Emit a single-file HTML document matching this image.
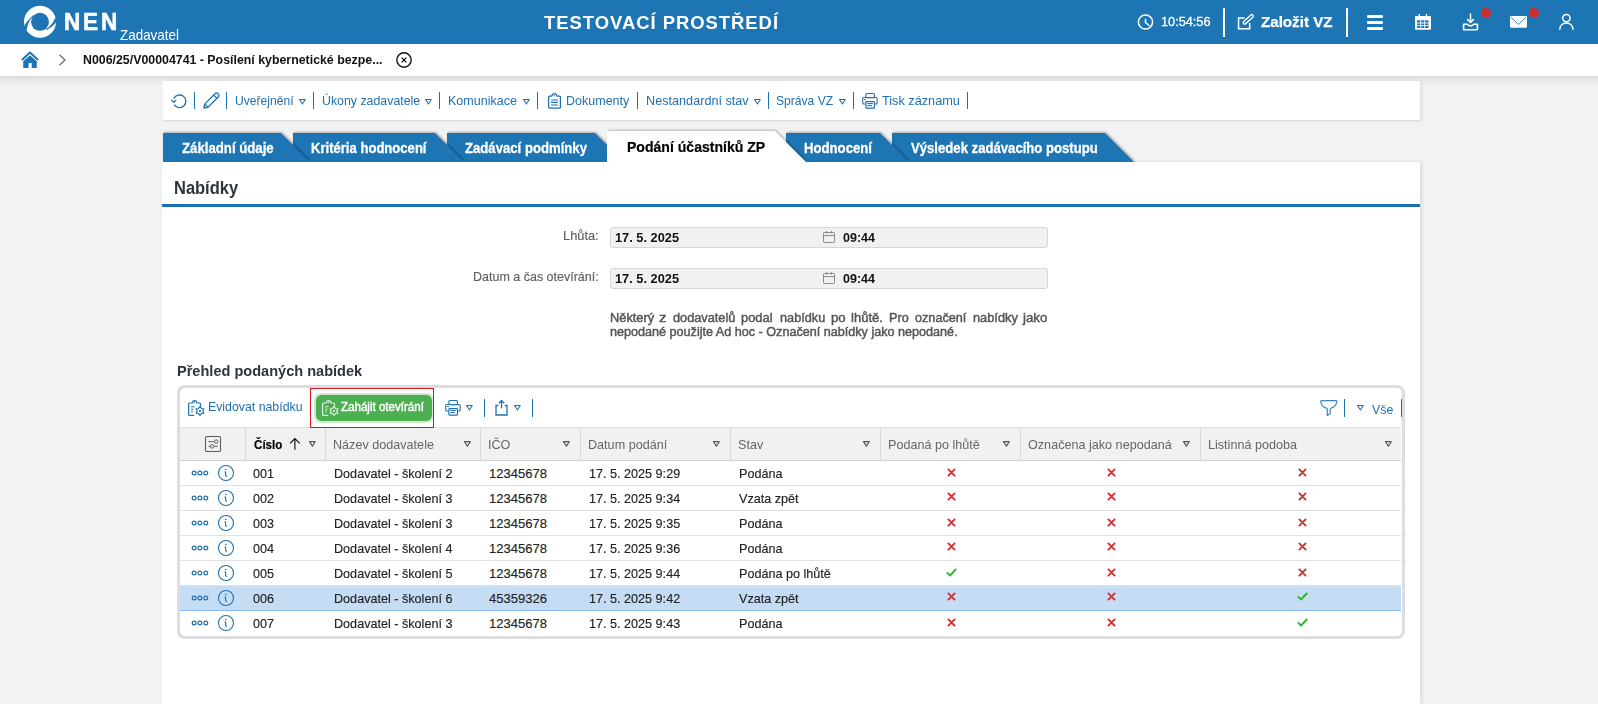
<!DOCTYPE html>
<html><head><meta charset="utf-8"><style>
html,body{margin:0;padding:0;}
body{width:1598px;height:704px;overflow:hidden;position:relative;background:#f2f2f2;font-family:"Liberation Sans", sans-serif;}
.t{position:absolute;white-space:nowrap;line-height:1;transform-origin:0 0;}
.a{position:absolute;}
svg{position:absolute;overflow:visible;}
</style></head><body>
<div class="a" style="left:0px;top:0px;width:1598px;height:44px;background:#1e75b4;"></div>
<svg style="left:20px;top:2px;" width="40" height="40" viewBox="0 0 40 40"><circle cx="20" cy="19.8" r="16" fill="#fff"/><circle cx="20" cy="19.85" r="9" fill="#1e75b4"/><path d="M3.6 24.9 Q6.2 19.8 12.9 13.2 L13.5 14.0 Q7.6 19 6.7 28.6 Z" fill="#1e75b4"/><path d="M35.2 15.6 Q33 23 25.8 27.2 L26.6 27.9 Q33.8 24.2 37 19 Z" fill="#1e75b4"/></svg>
<svg style="left:1136px;top:12px;" width="20" height="20" viewBox="0 0 20 20"><circle cx="9.5" cy="10" r="7.1" stroke="#fff" stroke-width="1.5" fill="none"/><path d="M9.5 7.3 V10.5 L13 13.5" stroke="#fff" stroke-width="1.5" fill="none" stroke-linecap="round" stroke-linejoin="round"/></svg>
<div class="a" style="left:1222.5px;top:8px;width:2px;height:29px;background:#fff;"></div>
<div class="a" style="left:1345.5px;top:8px;width:2px;height:29px;background:#fff;"></div>
<svg style="left:1235px;top:12px;" width="22" height="20" viewBox="0 0 22 20"><path d="M9.6 6.05 H3.55 V16.7 H14.65 V11.1" stroke="#fff" stroke-width="1.5" fill="none"/><rect x="-6.3" y="-1.5" width="12.6" height="3" rx="1.5" transform="translate(13.3 7.3) rotate(-42)" stroke="#fff" stroke-width="1.35" fill="none"/></svg>
<div class="a" style="left:1366.8px;top:15px;width:16.2px;height:2.6px;background:#fff;border-radius:1.3px;"></div>
<div class="a" style="left:1366.8px;top:21px;width:16.2px;height:2.6px;background:#fff;border-radius:1.3px;"></div>
<div class="a" style="left:1366.8px;top:27px;width:16.2px;height:2.6px;background:#fff;border-radius:1.3px;"></div>
<svg style="left:1413px;top:12px;" width="20" height="20" viewBox="0 0 20 20"><rect x="2" y="4" width="16" height="13.8" rx="1" fill="#fff"/><rect x="4" y="8.3" width="11.5" height="7.7" fill="#1e75b4"/><path d="M4 11 H15.5 M4 13.6 H15.5 M7.8 8.3 V16 M11.6 8.3 V16" stroke="#fff" stroke-width="0.9"/><rect x="5.6" y="2" width="1.4" height="3.5" fill="#fff"/><rect x="12.8" y="2" width="1.4" height="3.5" fill="#fff"/></svg>
<svg style="left:1461px;top:12px;" width="20" height="20" viewBox="0 0 20 20"><path d="M9.5 2 V10.3 M6.6 7.6 L9.5 10.5 L12.4 7.6" stroke="#fff" stroke-width="1.5" fill="none" stroke-linecap="round" stroke-linejoin="round"/><path d="M2.6 12.3 H6.2 Q9.5 15.5 12.8 12.3 H16.4 V17.2 Q16.4 17.8 15.8 17.8 H3.2 Q2.6 17.8 2.6 17.2 Z" stroke="#fff" stroke-width="1.6" fill="none" stroke-linejoin="round"/></svg>
<div class="a" style="left:1481px;top:8px;width:10px;height:10px;border-radius:50%;background:#d02e2e;"></div>
<svg style="left:1509px;top:15px;" width="20" height="14" viewBox="0 0 20 14"><rect x="1" y="1" width="17" height="11.8" rx="1.2" fill="#fff"/><path d="M2 2.3 L9.5 9.5 L17 2.3" stroke="#1e75b4" stroke-width="0.9" fill="none"/></svg>
<div class="a" style="left:1529px;top:8px;width:10px;height:10px;border-radius:50%;background:#d02e2e;"></div>
<svg style="left:1557px;top:12px;" width="20" height="20" viewBox="0 0 20 20"><circle cx="9.4" cy="6.1" r="3.7" stroke="#fff" stroke-width="1.5" fill="none"/><path d="M2.8 17.8 C2.8 13.5 5.7 11 9.4 11 C13.1 11 16 13.5 16 17.8" stroke="#fff" stroke-width="1.5" fill="none"/></svg>
<div class="a" style="left:0px;top:44px;width:1598px;height:32px;background:#fff;"></div>
<div class="a" style="left:0px;top:76px;width:1598px;height:10px;background:linear-gradient(#dadada,#e9e9e9 40%,#f2f2f2);"></div>
<svg style="left:20px;top:50px;" width="20" height="20" viewBox="0 0 20 20"><path d="M2.4 9.4 L10 2.6 L17.6 9.4" stroke="#1e75b4" stroke-width="2" fill="none" stroke-linecap="round" stroke-linejoin="round"/><path d="M3.2 11.2 L10 5.3 L16.8 11.2 V18 H11.7 V12.9 H8.6 V18 H3.2 Z" fill="#1e75b4"/></svg>
<svg style="left:56px;top:52px;" width="12" height="16" viewBox="0 0 12 16"><path d="M3.5 2.8 L9 8 L3.5 13.2" stroke="#6a6a6a" stroke-width="1.2" fill="none"/></svg>
<svg style="left:394px;top:50px;" width="20" height="20" viewBox="0 0 20 20"><circle cx="10" cy="10" r="7.2" stroke="#111" stroke-width="1.4" fill="none"/><path d="M7.6 7.6 L12.4 12.4 M12.4 7.6 L7.6 12.4" stroke="#111" stroke-width="1.3"/></svg>
<div class="a" style="left:163px;top:81px;width:1257px;height:40px;background:#fff;box-shadow:2px 0 3px rgba(0,0,0,0.08);border-bottom:1px solid #dcdcdc;box-sizing:border-box;"></div>
<svg style="left:168px;top:90px;" width="22" height="22" viewBox="0 0 22 22"><path d="M6.2 14.6 A6.3 6.3 0 1 0 5.9 8.6" stroke="#1f70b0" stroke-width="1.3" fill="none"/><path d="M3.4 10 L5.8 12.4 L8.2 10" stroke="#1f70b0" stroke-width="1.3" fill="none" stroke-linejoin="round"/></svg>
<div class="a" style="left:193.8px;top:92px;width:1.2px;height:17px;background:#1f70b0;"></div>
<div class="a" style="left:225.8px;top:92px;width:1.2px;height:17px;background:#1f70b0;"></div>
<div class="a" style="left:312.79999999999995px;top:92px;width:1.2px;height:17px;background:#1f70b0;"></div>
<div class="a" style="left:438.79999999999995px;top:92px;width:1.2px;height:17px;background:#1f70b0;"></div>
<div class="a" style="left:536.8px;top:92px;width:1.2px;height:17px;background:#1f70b0;"></div>
<div class="a" style="left:636.8px;top:92px;width:1.2px;height:17px;background:#1f70b0;"></div>
<div class="a" style="left:767.8px;top:92px;width:1.2px;height:17px;background:#1f70b0;"></div>
<div class="a" style="left:852.8px;top:92px;width:1.2px;height:17px;background:#1f70b0;"></div>
<div class="a" style="left:966.8px;top:92px;width:1.2px;height:17px;background:#1f70b0;"></div>
<svg style="left:201px;top:90px;" width="22" height="22" viewBox="0 0 22 22"><path d="M2.8 18.2 L3.7 14.1 L14.3 3.5 a1.8 1.8 0 0 1 2.5 0 L17.5 4.2 a1.8 1.8 0 0 1 0 2.5 L6.9 17.3 Z" stroke="#1f70b0" stroke-width="1.25" fill="none" stroke-linejoin="round"/><path d="M3.7 14.1 L6.9 17.3 M12.7 5.1 L15.9 8.3" stroke="#1f70b0" stroke-width="1.25"/></svg>
<svg style="left:297.7px;top:97.5px;" width="8.8" height="7.6" viewBox="0 0 8.8 7.6"><path d="M1.55 1.55 H7.25 L4.40 6.05 Z" stroke="#1f70b0" stroke-width="1.1" fill="none" stroke-linejoin="round"/></svg>
<svg style="left:424px;top:97.5px;" width="8.8" height="7.6" viewBox="0 0 8.8 7.6"><path d="M1.55 1.55 H7.25 L4.40 6.05 Z" stroke="#1f70b0" stroke-width="1.1" fill="none" stroke-linejoin="round"/></svg>
<svg style="left:522px;top:97.5px;" width="8.8" height="7.6" viewBox="0 0 8.8 7.6"><path d="M1.55 1.55 H7.25 L4.40 6.05 Z" stroke="#1f70b0" stroke-width="1.1" fill="none" stroke-linejoin="round"/></svg>
<svg style="left:753px;top:97.5px;" width="8.8" height="7.6" viewBox="0 0 8.8 7.6"><path d="M1.55 1.55 H7.25 L4.40 6.05 Z" stroke="#1f70b0" stroke-width="1.1" fill="none" stroke-linejoin="round"/></svg>
<svg style="left:837.9px;top:97.5px;" width="8.8" height="7.6" viewBox="0 0 8.8 7.6"><path d="M1.55 1.55 H7.25 L4.40 6.05 Z" stroke="#1f70b0" stroke-width="1.1" fill="none" stroke-linejoin="round"/></svg>
<svg style="left:545px;top:92px;" width="18" height="18" viewBox="0 0 18 18"><path d="M6.8 4 H4.6 Q3.6 4 3.6 5 V15.2 Q3.6 16.2 4.6 16.2 H14.4 Q15.4 16.2 15.4 15.2 V5 Q15.4 4 14.4 4 H12 Q11.4 1.6 9.4 1.6 Q7.4 1.6 6.8 4 Z" stroke="#1f70b0" stroke-width="1.25" fill="none" stroke-linejoin="round"/><circle cx="9.4" cy="3.7" r="0.65" fill="#1f70b0"/><path d="M6.1 8 H12.9 M6.1 10.4 H12.9 M6.1 13 H12.9" stroke="#1f70b0" stroke-width="1.1"/></svg>
<svg style="left:861px;top:92px;" width="18" height="18" viewBox="0 0 18 18"><rect x="4.85" y="1.55" width="8.6" height="4.2" rx="1" stroke="#1f70b0" stroke-width="1.1" fill="none"/><path d="M4.85 12.05 H2.75 Q1.75 12.05 1.75 11.05 V6.55 Q1.75 5.55 2.75 5.55 H15.15 Q16.15 5.55 16.15 6.55 V11.05 Q16.15 12.05 15.15 12.05 H13.45" stroke="#1f70b0" stroke-width="1.1" fill="none"/><rect x="4.85" y="9.65" width="8.6" height="6.5" rx="0.6" stroke="#1f70b0" stroke-width="1.1" fill="#fff"/><path d="M6.2 11.6 H11.9 M6.2 13.6 H11" stroke="#1f70b0" stroke-width="1"/><path d="M3 7.5 H5" stroke="#1f70b0" stroke-width="0.9"/></svg>
<div class="a" style="left:162px;top:162px;width:1258px;height:542px;background:#fff;box-shadow:2px 0 4px rgba(0,0,0,0.10);"></div>
<svg style="left:0;top:0;overflow:hidden" width="1598" height="162" viewBox="0 0 1598 162"><polygon points="892,133 1105,133 1134,162 892,162" fill="#1e75b4" style="filter:drop-shadow(1.5px -1px 1px rgba(0,0,0,0.3))"/><polygon points="786,133 880,133 909,162 786,162" fill="#1e75b4" style="filter:drop-shadow(1.5px -1px 1px rgba(0,0,0,0.3))"/><polygon points="447,133 595,133 624,162 447,162" fill="#1e75b4" style="filter:drop-shadow(1.5px -1px 1px rgba(0,0,0,0.3))"/><polygon points="293,133 435,133 464,162 293,162" fill="#1e75b4" style="filter:drop-shadow(1.5px -1px 1px rgba(0,0,0,0.3))"/><polygon points="163,133 281,133 310,162 163,162" fill="#1e75b4" style="filter:drop-shadow(1.5px -1px 1px rgba(0,0,0,0.3))"/><polygon points="607,131 775,131 806,162 607,162" fill="#fff" style="filter:drop-shadow(1.5px -1px 1px rgba(0,0,0,0.25))"/></svg>
<div class="a" style="left:162px;top:204px;width:1258px;height:3px;background:#1a6fb0;"></div>
<div class="a" style="left:610px;top:227px;width:438px;height:21px;background:#f1f1f1;border:1px solid #d6d6d6;border-radius:3px;box-sizing:border-box;"></div>
<svg style="left:822px;top:230px;" width="14" height="14" viewBox="0 0 14 14"><rect x="1.5" y="2.5" width="11" height="10" rx="0.8" stroke="#8a8a8a" stroke-width="1" fill="none"/><path d="M1.5 5.6 H12.5" stroke="#8a8a8a" stroke-width="1"/><path d="M4.5 1 V3.5 M9.5 1 V3.5" stroke="#8a8a8a" stroke-width="1"/></svg>
<div class="a" style="left:610px;top:268px;width:438px;height:21px;background:#f1f1f1;border:1px solid #d6d6d6;border-radius:3px;box-sizing:border-box;"></div>
<svg style="left:822px;top:271px;" width="14" height="14" viewBox="0 0 14 14"><rect x="1.5" y="2.5" width="11" height="10" rx="0.8" stroke="#8a8a8a" stroke-width="1" fill="none"/><path d="M1.5 5.6 H12.5" stroke="#8a8a8a" stroke-width="1"/><path d="M4.5 1 V3.5 M9.5 1 V3.5" stroke="#8a8a8a" stroke-width="1"/></svg>
<div class="a" style="left:177px;top:385px;width:1228px;height:254px;border:3px solid #dcdde0;border-radius:8px;background:#fff;box-sizing:border-box;"></div>
<svg style="left:187px;top:399px;" width="18" height="18" viewBox="0 0 18 18"><path d="M7.2 16.4 H2.6 Q1.6 16.4 1.6 15.4 V5 Q1.6 4 2.6 4 H5.2 Q5.6 1.6 7.6 1.6 Q9.6 1.6 10 4 H12.5 Q13.5 4 13.5 5 V7.6" stroke="#1f70b0" stroke-width="1.2" fill="none" stroke-linejoin="round"/><circle cx="7.6" cy="3.6" r="0.7" fill="#1f70b0"/><path d="M4.1 7.7 H7.6 M4.1 10.3 H6.6 M4.1 12.7 H6" stroke="#1f70b0" stroke-width="1.1"/><path d="M13.00 7.60 L14.45 9.49 L16.81 9.80 L15.90 12.00 L16.81 14.20 L14.45 14.51 L13.00 16.40 L11.55 14.51 L9.19 14.20 L10.10 12.00 L9.19 9.80 L11.55 9.49 Z" stroke="#1f70b0" stroke-width="1.2" fill="#fff" stroke-linejoin="round"/><circle cx="13" cy="12" r="1.1" fill="#1f70b0"/></svg>
<div class="a" style="left:314px;top:393px;width:119.5px;height:29.5px;border-radius:7px;background:#4caf50;border:2px solid #cfe8cf;box-sizing:border-box;background-clip:padding-box;"></div>
<svg style="left:321px;top:399px;" width="18" height="18" viewBox="0 0 18 18"><path d="M7.2 16.4 H2.6 Q1.6 16.4 1.6 15.4 V5 Q1.6 4 2.6 4 H5.2 Q5.6 1.6 7.6 1.6 Q9.6 1.6 10 4 H12.5 Q13.5 4 13.5 5 V7.6" stroke="#e3f2e3" stroke-width="1.2" fill="none" stroke-linejoin="round"/><circle cx="7.6" cy="3.6" r="0.7" fill="#e3f2e3"/><path d="M4.1 7.7 H7.6 M4.1 10.3 H6.6 M4.1 12.7 H6" stroke="#e3f2e3" stroke-width="1.1"/><path d="M13.00 7.60 L14.45 9.49 L16.81 9.80 L15.90 12.00 L16.81 14.20 L14.45 14.51 L13.00 16.40 L11.55 14.51 L9.19 14.20 L10.10 12.00 L9.19 9.80 L11.55 9.49 Z" stroke="#e3f2e3" stroke-width="1.2" fill="#4caf50" stroke-linejoin="round"/><circle cx="13" cy="12" r="1.1" fill="#e3f2e3"/></svg>
<svg style="left:444px;top:399px;" width="18" height="18" viewBox="0 0 18 18"><rect x="4.85" y="1.55" width="8.6" height="4.2" rx="1" stroke="#1f70b0" stroke-width="1.1" fill="none"/><path d="M4.85 12.05 H2.75 Q1.75 12.05 1.75 11.05 V6.55 Q1.75 5.55 2.75 5.55 H15.15 Q16.15 5.55 16.15 6.55 V11.05 Q16.15 12.05 15.15 12.05 H13.45" stroke="#1f70b0" stroke-width="1.1" fill="none"/><rect x="4.85" y="9.65" width="8.6" height="6.5" rx="0.6" stroke="#1f70b0" stroke-width="1.1" fill="#fff"/><path d="M6.2 11.6 H11.9 M6.2 13.6 H11" stroke="#1f70b0" stroke-width="1"/><path d="M3 7.5 H5" stroke="#1f70b0" stroke-width="0.9"/></svg>
<svg style="left:465px;top:404px;" width="8.8" height="7.6" viewBox="0 0 8.8 7.6"><path d="M1.55 1.55 H7.25 L4.40 6.05 Z" stroke="#1f70b0" stroke-width="1.1" fill="none" stroke-linejoin="round"/></svg>
<div class="a" style="left:483.79999999999995px;top:399px;width:1.2px;height:18px;background:#1f70b0;"></div>
<svg style="left:492px;top:398px;" width="20" height="20" viewBox="0 0 20 20"><path d="M6.3 7.5 H4 V17 H15 V7.5 H12.7" stroke="#1f70b0" stroke-width="1.3" fill="none"/><path d="M9.5 10.2 V2.5 M6.8 5.2 L9.5 2.5 L12.2 5.2" stroke="#1f70b0" stroke-width="1.3" fill="none" stroke-linejoin="round"/></svg>
<svg style="left:512.6px;top:404px;" width="8.8" height="7.6" viewBox="0 0 8.8 7.6"><path d="M1.55 1.55 H7.25 L4.40 6.05 Z" stroke="#1f70b0" stroke-width="1.1" fill="none" stroke-linejoin="round"/></svg>
<div class="a" style="left:531.8px;top:399px;width:1.2px;height:18px;background:#1f70b0;"></div>
<svg style="left:1319px;top:398px;" width="20" height="20" viewBox="0 0 20 20"><path d="M2.5 2.7 H17.1 Q18 2.7 17.8 3.6 Q17 8.8 12 10.2 Q11.2 10.5 11.2 11.3 V15.6 L8.3 17.4 V11.3 Q8.3 10.5 7.5 10.2 Q2.5 8.8 1.7 3.6 Q1.5 2.7 2.5 2.7 Z" stroke="#3a86c4" stroke-width="1.2" fill="none" stroke-linejoin="round"/></svg>
<div class="a" style="left:1343.8000000000002px;top:399px;width:1.2px;height:18px;background:#1f70b0;"></div>
<svg style="left:1356px;top:404px;" width="8.8" height="7.6" viewBox="0 0 8.8 7.6"><path d="M1.55 1.55 H7.25 L4.40 6.05 Z" stroke="#1f70b0" stroke-width="1.1" fill="none" stroke-linejoin="round"/></svg>
<div class="a" style="left:1400.8000000000002px;top:399px;width:1.2px;height:18px;background:#1f70b0;"></div>
<div class="a" style="left:180px;top:427px;width:1221px;height:34px;background:#f1f1f1;border-top:1px solid #e0e0e0;border-bottom:1px solid #d3d3d3;box-sizing:border-box;"></div>
<div class="a" style="left:245px;top:428px;width:1px;height:32px;background:#d8d8d8;"></div>
<div class="a" style="left:325px;top:428px;width:1px;height:32px;background:#d8d8d8;"></div>
<div class="a" style="left:480px;top:428px;width:1px;height:32px;background:#d8d8d8;"></div>
<div class="a" style="left:580px;top:428px;width:1px;height:32px;background:#d8d8d8;"></div>
<div class="a" style="left:730px;top:428px;width:1px;height:32px;background:#d8d8d8;"></div>
<div class="a" style="left:880px;top:428px;width:1px;height:32px;background:#d8d8d8;"></div>
<div class="a" style="left:1020px;top:428px;width:1px;height:32px;background:#d8d8d8;"></div>
<div class="a" style="left:1200px;top:428px;width:1px;height:32px;background:#d8d8d8;"></div>
<svg style="left:204px;top:435px;" width="18" height="18" viewBox="0 0 18 18"><rect x="1.5" y="1.5" width="15" height="15" rx="1.2" stroke="#5a5a5a" stroke-width="1.05" fill="none"/><path d="M4.3 6.6 H10.4 M14 6.6 H14 M4.6 11.4 H6.2 M9.8 11.4 H13.8" stroke="#5a5a5a" stroke-width="0.95"/><circle cx="12.2" cy="6.6" r="1.75" fill="#f1f1f1" stroke="#5a5a5a" stroke-width="0.95"/><circle cx="8" cy="11.4" r="1.75" fill="#f1f1f1" stroke="#5a5a5a" stroke-width="0.95"/></svg>
<svg style="left:287px;top:436px;" width="16" height="16" viewBox="0 0 16 16"><path d="M7.9 2.6 V13.8 M3.1 7.3 L7.9 2.6 L12.7 7.3" stroke="#111" stroke-width="1.15" fill="none"/></svg>
<svg style="left:307.5px;top:440px;" width="8.8" height="7.8" viewBox="0 0 8.8 7.8"><path d="M1.60 1.60 H7.20 L4.40 6.20 Z" stroke="#555" stroke-width="1.2" fill="none" stroke-linejoin="round"/></svg>
<svg style="left:462.5px;top:440px;" width="8.8" height="7.8" viewBox="0 0 8.8 7.8"><path d="M1.60 1.60 H7.20 L4.40 6.20 Z" stroke="#555" stroke-width="1.2" fill="none" stroke-linejoin="round"/></svg>
<svg style="left:562px;top:440px;" width="8.8" height="7.8" viewBox="0 0 8.8 7.8"><path d="M1.60 1.60 H7.20 L4.40 6.20 Z" stroke="#555" stroke-width="1.2" fill="none" stroke-linejoin="round"/></svg>
<svg style="left:712px;top:440px;" width="8.8" height="7.8" viewBox="0 0 8.8 7.8"><path d="M1.60 1.60 H7.20 L4.40 6.20 Z" stroke="#555" stroke-width="1.2" fill="none" stroke-linejoin="round"/></svg>
<svg style="left:862px;top:440px;" width="8.8" height="7.8" viewBox="0 0 8.8 7.8"><path d="M1.60 1.60 H7.20 L4.40 6.20 Z" stroke="#555" stroke-width="1.2" fill="none" stroke-linejoin="round"/></svg>
<svg style="left:1002px;top:440px;" width="8.8" height="7.8" viewBox="0 0 8.8 7.8"><path d="M1.60 1.60 H7.20 L4.40 6.20 Z" stroke="#555" stroke-width="1.2" fill="none" stroke-linejoin="round"/></svg>
<svg style="left:1182px;top:440px;" width="8.8" height="7.8" viewBox="0 0 8.8 7.8"><path d="M1.60 1.60 H7.20 L4.40 6.20 Z" stroke="#555" stroke-width="1.2" fill="none" stroke-linejoin="round"/></svg>
<svg style="left:1383.6px;top:440px;" width="8.8" height="7.8" viewBox="0 0 8.8 7.8"><path d="M1.60 1.60 H7.20 L4.40 6.20 Z" stroke="#555" stroke-width="1.2" fill="none" stroke-linejoin="round"/></svg>
<div class="a" style="left:310px;top:388px;width:124px;height:40px;border:1px solid #e0141e;box-sizing:border-box;"></div>
<div class="a" style="left:180px;top:485px;width:1221px;height:1px;background:#e2e2e2;"></div>
<svg style="left:190px;top:468.8px;" width="20" height="8" viewBox="0 0 20 8"><circle cx="4.1" cy="4" r="1.9" stroke="#1f70b0" stroke-width="1.2" fill="none"/><circle cx="9.85" cy="4" r="1.9" stroke="#1f70b0" stroke-width="1.2" fill="none"/><circle cx="15.76" cy="4" r="1.9" stroke="#1f70b0" stroke-width="1.2" fill="none"/></svg>
<svg style="left:216px;top:462.8px;" width="20" height="20" viewBox="0 0 20 20"><circle cx="10" cy="10" r="7.5" stroke="#1f70b0" stroke-width="1.1" fill="none"/><circle cx="9.8" cy="6.5" r="0.8" fill="#1f70b0"/><path d="M8.5 9 H9.6 V12.2 Q9.6 13.4 11 13.4" stroke="#1f70b0" stroke-width="1.1" fill="none"/></svg>
<div class="a" style="left:180px;top:510px;width:1221px;height:1px;background:#e2e2e2;"></div>
<svg style="left:190px;top:493.8px;" width="20" height="8" viewBox="0 0 20 8"><circle cx="4.1" cy="4" r="1.9" stroke="#1f70b0" stroke-width="1.2" fill="none"/><circle cx="9.85" cy="4" r="1.9" stroke="#1f70b0" stroke-width="1.2" fill="none"/><circle cx="15.76" cy="4" r="1.9" stroke="#1f70b0" stroke-width="1.2" fill="none"/></svg>
<svg style="left:216px;top:487.8px;" width="20" height="20" viewBox="0 0 20 20"><circle cx="10" cy="10" r="7.5" stroke="#1f70b0" stroke-width="1.1" fill="none"/><circle cx="9.8" cy="6.5" r="0.8" fill="#1f70b0"/><path d="M8.5 9 H9.6 V12.2 Q9.6 13.4 11 13.4" stroke="#1f70b0" stroke-width="1.1" fill="none"/></svg>
<div class="a" style="left:180px;top:535px;width:1221px;height:1px;background:#e2e2e2;"></div>
<svg style="left:190px;top:518.8px;" width="20" height="8" viewBox="0 0 20 8"><circle cx="4.1" cy="4" r="1.9" stroke="#1f70b0" stroke-width="1.2" fill="none"/><circle cx="9.85" cy="4" r="1.9" stroke="#1f70b0" stroke-width="1.2" fill="none"/><circle cx="15.76" cy="4" r="1.9" stroke="#1f70b0" stroke-width="1.2" fill="none"/></svg>
<svg style="left:216px;top:512.8px;" width="20" height="20" viewBox="0 0 20 20"><circle cx="10" cy="10" r="7.5" stroke="#1f70b0" stroke-width="1.1" fill="none"/><circle cx="9.8" cy="6.5" r="0.8" fill="#1f70b0"/><path d="M8.5 9 H9.6 V12.2 Q9.6 13.4 11 13.4" stroke="#1f70b0" stroke-width="1.1" fill="none"/></svg>
<div class="a" style="left:180px;top:560px;width:1221px;height:1px;background:#e2e2e2;"></div>
<svg style="left:190px;top:543.8px;" width="20" height="8" viewBox="0 0 20 8"><circle cx="4.1" cy="4" r="1.9" stroke="#1f70b0" stroke-width="1.2" fill="none"/><circle cx="9.85" cy="4" r="1.9" stroke="#1f70b0" stroke-width="1.2" fill="none"/><circle cx="15.76" cy="4" r="1.9" stroke="#1f70b0" stroke-width="1.2" fill="none"/></svg>
<svg style="left:216px;top:537.8px;" width="20" height="20" viewBox="0 0 20 20"><circle cx="10" cy="10" r="7.5" stroke="#1f70b0" stroke-width="1.1" fill="none"/><circle cx="9.8" cy="6.5" r="0.8" fill="#1f70b0"/><path d="M8.5 9 H9.6 V12.2 Q9.6 13.4 11 13.4" stroke="#1f70b0" stroke-width="1.1" fill="none"/></svg>
<div class="a" style="left:180px;top:585px;width:1221px;height:1px;background:#e2e2e2;"></div>
<svg style="left:190px;top:568.8px;" width="20" height="8" viewBox="0 0 20 8"><circle cx="4.1" cy="4" r="1.9" stroke="#1f70b0" stroke-width="1.2" fill="none"/><circle cx="9.85" cy="4" r="1.9" stroke="#1f70b0" stroke-width="1.2" fill="none"/><circle cx="15.76" cy="4" r="1.9" stroke="#1f70b0" stroke-width="1.2" fill="none"/></svg>
<svg style="left:216px;top:562.8px;" width="20" height="20" viewBox="0 0 20 20"><circle cx="10" cy="10" r="7.5" stroke="#1f70b0" stroke-width="1.1" fill="none"/><circle cx="9.8" cy="6.5" r="0.8" fill="#1f70b0"/><path d="M8.5 9 H9.6 V12.2 Q9.6 13.4 11 13.4" stroke="#1f70b0" stroke-width="1.1" fill="none"/></svg>
<div class="a" style="left:180px;top:586px;width:1221px;height:24px;background:#c5dcf5;"></div>
<div class="a" style="left:180px;top:610px;width:1221px;height:1px;background:#8fb9ea;"></div>
<svg style="left:190px;top:593.8px;" width="20" height="8" viewBox="0 0 20 8"><circle cx="4.1" cy="4" r="1.9" stroke="#1f70b0" stroke-width="1.2" fill="none"/><circle cx="9.85" cy="4" r="1.9" stroke="#1f70b0" stroke-width="1.2" fill="none"/><circle cx="15.76" cy="4" r="1.9" stroke="#1f70b0" stroke-width="1.2" fill="none"/></svg>
<svg style="left:216px;top:587.8px;" width="20" height="20" viewBox="0 0 20 20"><circle cx="10" cy="10" r="7.5" stroke="#1f70b0" stroke-width="1.1" fill="none"/><circle cx="9.8" cy="6.5" r="0.8" fill="#1f70b0"/><path d="M8.5 9 H9.6 V12.2 Q9.6 13.4 11 13.4" stroke="#1f70b0" stroke-width="1.1" fill="none"/></svg>
<svg style="left:190px;top:618.8px;" width="20" height="8" viewBox="0 0 20 8"><circle cx="4.1" cy="4" r="1.9" stroke="#1f70b0" stroke-width="1.2" fill="none"/><circle cx="9.85" cy="4" r="1.9" stroke="#1f70b0" stroke-width="1.2" fill="none"/><circle cx="15.76" cy="4" r="1.9" stroke="#1f70b0" stroke-width="1.2" fill="none"/></svg>
<svg style="left:216px;top:612.8px;" width="20" height="20" viewBox="0 0 20 20"><circle cx="10" cy="10" r="7.5" stroke="#1f70b0" stroke-width="1.1" fill="none"/><circle cx="9.8" cy="6.5" r="0.8" fill="#1f70b0"/><path d="M8.5 9 H9.6 V12.2 Q9.6 13.4 11 13.4" stroke="#1f70b0" stroke-width="1.1" fill="none"/></svg>
<svg style="left:945px;top:466px;" width="13" height="13" viewBox="0 0 13 13"><path d="M3.4 3.4 L9.6 9.6 M9.6 3.4 L3.4 9.6" stroke="#d32f2f" stroke-width="1.9" stroke-linecap="round"/></svg>
<svg style="left:1105px;top:466px;" width="13" height="13" viewBox="0 0 13 13"><path d="M3.4 3.4 L9.6 9.6 M9.6 3.4 L3.4 9.6" stroke="#d32f2f" stroke-width="1.9" stroke-linecap="round"/></svg>
<svg style="left:1296px;top:466px;" width="13" height="13" viewBox="0 0 13 13"><path d="M3.4 3.4 L9.6 9.6 M9.6 3.4 L3.4 9.6" stroke="#d32f2f" stroke-width="1.9" stroke-linecap="round"/></svg>
<svg style="left:945px;top:490px;" width="13" height="13" viewBox="0 0 13 13"><path d="M3.4 3.4 L9.6 9.6 M9.6 3.4 L3.4 9.6" stroke="#d32f2f" stroke-width="1.9" stroke-linecap="round"/></svg>
<svg style="left:1105px;top:490px;" width="13" height="13" viewBox="0 0 13 13"><path d="M3.4 3.4 L9.6 9.6 M9.6 3.4 L3.4 9.6" stroke="#d32f2f" stroke-width="1.9" stroke-linecap="round"/></svg>
<svg style="left:1296px;top:490px;" width="13" height="13" viewBox="0 0 13 13"><path d="M3.4 3.4 L9.6 9.6 M9.6 3.4 L3.4 9.6" stroke="#d32f2f" stroke-width="1.9" stroke-linecap="round"/></svg>
<svg style="left:945px;top:516px;" width="13" height="13" viewBox="0 0 13 13"><path d="M3.4 3.4 L9.6 9.6 M9.6 3.4 L3.4 9.6" stroke="#d32f2f" stroke-width="1.9" stroke-linecap="round"/></svg>
<svg style="left:1105px;top:516px;" width="13" height="13" viewBox="0 0 13 13"><path d="M3.4 3.4 L9.6 9.6 M9.6 3.4 L3.4 9.6" stroke="#d32f2f" stroke-width="1.9" stroke-linecap="round"/></svg>
<svg style="left:1296px;top:516px;" width="13" height="13" viewBox="0 0 13 13"><path d="M3.4 3.4 L9.6 9.6 M9.6 3.4 L3.4 9.6" stroke="#d32f2f" stroke-width="1.9" stroke-linecap="round"/></svg>
<svg style="left:945px;top:540px;" width="13" height="13" viewBox="0 0 13 13"><path d="M3.4 3.4 L9.6 9.6 M9.6 3.4 L3.4 9.6" stroke="#d32f2f" stroke-width="1.9" stroke-linecap="round"/></svg>
<svg style="left:1105px;top:540px;" width="13" height="13" viewBox="0 0 13 13"><path d="M3.4 3.4 L9.6 9.6 M9.6 3.4 L3.4 9.6" stroke="#d32f2f" stroke-width="1.9" stroke-linecap="round"/></svg>
<svg style="left:1296px;top:540px;" width="13" height="13" viewBox="0 0 13 13"><path d="M3.4 3.4 L9.6 9.6 M9.6 3.4 L3.4 9.6" stroke="#d32f2f" stroke-width="1.9" stroke-linecap="round"/></svg>
<svg style="left:945px;top:566px;" width="13" height="13" viewBox="0 0 13 13"><path d="M2.3 6.9 L5.1 9.5 L10.7 3.5" stroke="#2eb82e" stroke-width="1.9" fill="none" stroke-linecap="round" stroke-linejoin="round"/></svg>
<svg style="left:1105px;top:566px;" width="13" height="13" viewBox="0 0 13 13"><path d="M3.4 3.4 L9.6 9.6 M9.6 3.4 L3.4 9.6" stroke="#d32f2f" stroke-width="1.9" stroke-linecap="round"/></svg>
<svg style="left:1296px;top:566px;" width="13" height="13" viewBox="0 0 13 13"><path d="M3.4 3.4 L9.6 9.6 M9.6 3.4 L3.4 9.6" stroke="#d32f2f" stroke-width="1.9" stroke-linecap="round"/></svg>
<svg style="left:945px;top:590px;" width="13" height="13" viewBox="0 0 13 13"><path d="M3.4 3.4 L9.6 9.6 M9.6 3.4 L3.4 9.6" stroke="#d32f2f" stroke-width="1.9" stroke-linecap="round"/></svg>
<svg style="left:1105px;top:590px;" width="13" height="13" viewBox="0 0 13 13"><path d="M3.4 3.4 L9.6 9.6 M9.6 3.4 L3.4 9.6" stroke="#d32f2f" stroke-width="1.9" stroke-linecap="round"/></svg>
<svg style="left:1296px;top:590px;" width="13" height="13" viewBox="0 0 13 13"><path d="M2.3 6.9 L5.1 9.5 L10.7 3.5" stroke="#2eb82e" stroke-width="1.9" fill="none" stroke-linecap="round" stroke-linejoin="round"/></svg>
<svg style="left:945px;top:616px;" width="13" height="13" viewBox="0 0 13 13"><path d="M3.4 3.4 L9.6 9.6 M9.6 3.4 L3.4 9.6" stroke="#d32f2f" stroke-width="1.9" stroke-linecap="round"/></svg>
<svg style="left:1105px;top:616px;" width="13" height="13" viewBox="0 0 13 13"><path d="M3.4 3.4 L9.6 9.6 M9.6 3.4 L3.4 9.6" stroke="#d32f2f" stroke-width="1.9" stroke-linecap="round"/></svg>
<svg style="left:1296px;top:616px;" width="13" height="13" viewBox="0 0 13 13"><path d="M2.3 6.9 L5.1 9.5 L10.7 3.5" stroke="#2eb82e" stroke-width="1.9" fill="none" stroke-linecap="round" stroke-linejoin="round"/></svg>
<span class="t" id="nen" style="left:64.40px;top:9.68px;font-size:24px;font-weight:700;color:#fff;letter-spacing:3px;-webkit-text-stroke:0.6px #fff;transform:scaleX(0.9385);">NEN</span>
<span class="t" id="zad" style="left:120.40px;top:27.30px;font-size:15px;font-weight:400;color:#fff;transform:scaleX(0.8956);">Zadavatel</span>
<span class="t" id="test" style="left:544.40px;top:12.62px;font-size:19px;font-weight:700;color:#fff;letter-spacing:1px;transform:scaleX(0.9706);">TESTOVACÍ PROSTŘEDÍ</span>
<span class="t" id="time" style="left:1161.40px;top:15.40px;font-size:13px;font-weight:400;color:#fff;-webkit-text-stroke:0.3px #fff;transform:scaleX(0.9781);">10:54:56</span>
<span class="t" id="zal" style="left:1260.90px;top:13.70px;font-size:15px;font-weight:700;color:#fff;-webkit-text-stroke:0.25px #fff;transform:scaleX(1.0093);">Založit VZ</span>
<span class="t" id="bc" style="left:83.00px;top:53.40px;font-size:13px;font-weight:700;color:#111;transform:scaleX(0.9506);">N006/25/V00004741 - Posílení kybernetické bezpe...</span>
<span class="t" id="tb0" style="left:234.80px;top:94.00px;font-size:13px;font-weight:400;color:#1f70b0;transform:scaleX(0.9320);">Uveřejnění</span>
<span class="t" id="tb1" style="left:321.60px;top:94.00px;font-size:13px;font-weight:400;color:#1f70b0;transform:scaleX(0.9502);">Úkony zadavatele</span>
<span class="t" id="tb2" style="left:448.40px;top:94.00px;font-size:13px;font-weight:400;color:#1f70b0;transform:scaleX(0.9644);">Komunikace</span>
<span class="t" id="tb3" style="left:566.10px;top:94.00px;font-size:13px;font-weight:400;color:#1f70b0;transform:scaleX(0.9627);">Dokumenty</span>
<span class="t" id="tb4" style="left:646.00px;top:94.00px;font-size:13px;font-weight:400;color:#1f70b0;transform:scaleX(0.9733);">Nestandardní stav</span>
<span class="t" id="tb5" style="left:776.30px;top:94.00px;font-size:13px;font-weight:400;color:#1f70b0;transform:scaleX(0.9296);">Správa VZ</span>
<span class="t" id="tb6" style="left:882.10px;top:94.00px;font-size:13px;font-weight:400;color:#1f70b0;transform:scaleX(0.9772);">Tisk záznamu</span>
<span class="t" id="tab0" style="left:181.50px;top:140.85px;font-size:14px;font-weight:700;color:#fff;-webkit-text-stroke:0.3px #fff;transform:scaleX(0.9429);">Základní údaje</span>
<span class="t" id="tab1" style="left:311.40px;top:140.85px;font-size:14px;font-weight:700;color:#fff;-webkit-text-stroke:0.3px #fff;transform:scaleX(0.9338);">Kritéria hodnocení</span>
<span class="t" id="tab2" style="left:465.40px;top:140.85px;font-size:14px;font-weight:700;color:#fff;-webkit-text-stroke:0.3px #fff;transform:scaleX(0.9389);">Zadávací podmínky</span>
<span class="t" id="tab3" style="left:804.40px;top:140.85px;font-size:14px;font-weight:700;color:#fff;-webkit-text-stroke:0.3px #fff;transform:scaleX(0.9400);">Hodnocení</span>
<span class="t" id="tab4" style="left:910.60px;top:140.85px;font-size:14px;font-weight:700;color:#fff;-webkit-text-stroke:0.3px #fff;transform:scaleX(0.9379);">Výsledek zadávacího postupu</span>
<span class="t" id="tabA" style="left:627.20px;top:138.80px;font-size:15px;font-weight:700;color:#000;-webkit-text-stroke:0.2px #000;transform:scaleX(0.9368);">Podání účastníků ZP</span>
<span class="t" id="nab" style="left:174.10px;top:178.56px;font-size:18px;font-weight:700;color:#2f353b;transform:scaleX(0.9153);">Nabídky</span>
<span class="t" id="lbl1" style="left:563.40px;top:229.00px;font-size:13px;font-weight:400;color:#606060;-webkit-text-stroke:0.15px #606060;transform:scaleX(0.9874);">Lhůta:</span>
<span class="t" id="lbl2" style="left:473.40px;top:270.00px;font-size:13px;font-weight:400;color:#606060;-webkit-text-stroke:0.15px #606060;transform:scaleX(0.9611);">Datum a čas otevírání:</span>
<span class="t" id="d1" style="left:615.40px;top:230.60px;font-size:13px;font-weight:700;color:#111;transform:scaleX(0.9837);">17. 5. 2025</span>
<span class="t" id="h1" style="left:842.90px;top:230.60px;font-size:13px;font-weight:700;color:#111;transform:scaleX(0.9624);">09:44</span>
<span class="t" id="d2" style="left:615.40px;top:271.60px;font-size:13px;font-weight:700;color:#111;transform:scaleX(0.9837);">17. 5. 2025</span>
<span class="t" id="h2" style="left:842.90px;top:271.60px;font-size:13px;font-weight:700;color:#111;transform:scaleX(0.9624);">09:44</span>
<span class="t" id="prehled" style="left:177.40px;top:363.00px;font-size:15px;font-weight:700;color:#2f353b;transform:scaleX(0.9702);">Přehled podaných nabídek</span>
<span class="t" id="evid" style="left:207.90px;top:400.40px;font-size:13px;font-weight:400;color:#1f70b0;transform:scaleX(0.9475);">Evidovat nabídku</span>
<span class="t" id="zah" style="left:341.40px;top:401.42px;font-size:12.5px;font-weight:400;color:#fff;-webkit-text-stroke:0.45px #fff;transform:scaleX(0.9248);">Zahájit otevírání</span>
<span class="t" id="vse" style="left:1372.30px;top:402.70px;font-size:13px;font-weight:400;color:#1f70b0;transform:scaleX(0.9506);">Vše</span>
<span class="t" id="hc1" style="left:253.70px;top:437.80px;font-size:13px;font-weight:700;color:#000;-webkit-text-stroke:0.2px #000;transform:scaleX(0.8932);">Číslo</span>
<span class="t" id="hh0" style="left:333.40px;top:437.80px;font-size:13px;font-weight:400;color:#666;transform:scaleX(0.9700);">Název dodavatele</span>
<span class="t" id="hh1" style="left:488.40px;top:437.80px;font-size:13px;font-weight:400;color:#666;transform:scaleX(0.9700);">IČO</span>
<span class="t" id="hh2" style="left:588.40px;top:437.80px;font-size:13px;font-weight:400;color:#666;transform:scaleX(0.9700);">Datum podání</span>
<span class="t" id="hh3" style="left:738.40px;top:437.80px;font-size:13px;font-weight:400;color:#666;transform:scaleX(0.9700);">Stav</span>
<span class="t" id="hh4" style="left:888.40px;top:437.80px;font-size:13px;font-weight:400;color:#666;transform:scaleX(0.9700);">Podaná po lhůtě</span>
<span class="t" id="hh5" style="left:1028.40px;top:437.80px;font-size:13px;font-weight:400;color:#666;transform:scaleX(0.9700);">Označena jako nepodaná</span>
<span class="t" id="hh6" style="left:1208.40px;top:437.80px;font-size:13px;font-weight:400;color:#666;transform:scaleX(0.9700);">Listinná podoba</span>
<span class="t" id="r0c1" style="left:253.40px;top:467.00px;font-size:13px;font-weight:400;color:#222;-webkit-text-stroke:0.15px #222;transform:scaleX(0.9700);">001</span>
<span class="t" id="r0c2" style="left:333.90px;top:467.00px;font-size:13px;font-weight:400;color:#222;-webkit-text-stroke:0.15px #222;transform:scaleX(0.9700);">Dodavatel - školení 2</span>
<span class="t" id="r0c3" style="left:489.10px;top:467.00px;font-size:13px;font-weight:400;color:#222;-webkit-text-stroke:0.15px #222;">12345678</span>
<span class="t" id="r0c4" style="left:589.20px;top:467.00px;font-size:13px;font-weight:400;color:#222;-webkit-text-stroke:0.15px #222;transform:scaleX(0.9700);">17. 5. 2025 9:29</span>
<span class="t" id="r0c5" style="left:738.90px;top:467.00px;font-size:13px;font-weight:400;color:#222;-webkit-text-stroke:0.15px #222;transform:scaleX(0.9700);">Podána</span>
<span class="t" id="r1c1" style="left:253.40px;top:492.00px;font-size:13px;font-weight:400;color:#222;-webkit-text-stroke:0.15px #222;transform:scaleX(0.9700);">002</span>
<span class="t" id="r1c2" style="left:333.90px;top:492.00px;font-size:13px;font-weight:400;color:#222;-webkit-text-stroke:0.15px #222;transform:scaleX(0.9700);">Dodavatel - školení 3</span>
<span class="t" id="r1c3" style="left:489.10px;top:492.00px;font-size:13px;font-weight:400;color:#222;-webkit-text-stroke:0.15px #222;">12345678</span>
<span class="t" id="r1c4" style="left:589.20px;top:492.00px;font-size:13px;font-weight:400;color:#222;-webkit-text-stroke:0.15px #222;transform:scaleX(0.9700);">17. 5. 2025 9:34</span>
<span class="t" id="r1c5" style="left:738.90px;top:492.00px;font-size:13px;font-weight:400;color:#222;-webkit-text-stroke:0.15px #222;transform:scaleX(0.9700);">Vzata zpět</span>
<span class="t" id="r2c1" style="left:253.40px;top:517.00px;font-size:13px;font-weight:400;color:#222;-webkit-text-stroke:0.15px #222;transform:scaleX(0.9700);">003</span>
<span class="t" id="r2c2" style="left:333.90px;top:517.00px;font-size:13px;font-weight:400;color:#222;-webkit-text-stroke:0.15px #222;transform:scaleX(0.9700);">Dodavatel - školení 3</span>
<span class="t" id="r2c3" style="left:489.10px;top:517.00px;font-size:13px;font-weight:400;color:#222;-webkit-text-stroke:0.15px #222;">12345678</span>
<span class="t" id="r2c4" style="left:589.20px;top:517.00px;font-size:13px;font-weight:400;color:#222;-webkit-text-stroke:0.15px #222;transform:scaleX(0.9700);">17. 5. 2025 9:35</span>
<span class="t" id="r2c5" style="left:738.90px;top:517.00px;font-size:13px;font-weight:400;color:#222;-webkit-text-stroke:0.15px #222;transform:scaleX(0.9700);">Podána</span>
<span class="t" id="r3c1" style="left:253.40px;top:542.00px;font-size:13px;font-weight:400;color:#222;-webkit-text-stroke:0.15px #222;transform:scaleX(0.9700);">004</span>
<span class="t" id="r3c2" style="left:333.90px;top:542.00px;font-size:13px;font-weight:400;color:#222;-webkit-text-stroke:0.15px #222;transform:scaleX(0.9700);">Dodavatel - školení 4</span>
<span class="t" id="r3c3" style="left:489.10px;top:542.00px;font-size:13px;font-weight:400;color:#222;-webkit-text-stroke:0.15px #222;">12345678</span>
<span class="t" id="r3c4" style="left:589.20px;top:542.00px;font-size:13px;font-weight:400;color:#222;-webkit-text-stroke:0.15px #222;transform:scaleX(0.9700);">17. 5. 2025 9:36</span>
<span class="t" id="r3c5" style="left:738.90px;top:542.00px;font-size:13px;font-weight:400;color:#222;-webkit-text-stroke:0.15px #222;transform:scaleX(0.9700);">Podána</span>
<span class="t" id="r4c1" style="left:253.40px;top:567.00px;font-size:13px;font-weight:400;color:#222;-webkit-text-stroke:0.15px #222;transform:scaleX(0.9700);">005</span>
<span class="t" id="r4c2" style="left:333.90px;top:567.00px;font-size:13px;font-weight:400;color:#222;-webkit-text-stroke:0.15px #222;transform:scaleX(0.9700);">Dodavatel - školení 5</span>
<span class="t" id="r4c3" style="left:489.10px;top:567.00px;font-size:13px;font-weight:400;color:#222;-webkit-text-stroke:0.15px #222;">12345678</span>
<span class="t" id="r4c4" style="left:589.20px;top:567.00px;font-size:13px;font-weight:400;color:#222;-webkit-text-stroke:0.15px #222;transform:scaleX(0.9700);">17. 5. 2025 9:44</span>
<span class="t" id="r4c5" style="left:738.90px;top:567.00px;font-size:13px;font-weight:400;color:#222;-webkit-text-stroke:0.15px #222;transform:scaleX(0.9700);">Podána po lhůtě</span>
<span class="t" id="r5c1" style="left:253.40px;top:592.00px;font-size:13px;font-weight:400;color:#222;-webkit-text-stroke:0.15px #222;transform:scaleX(0.9700);">006</span>
<span class="t" id="r5c2" style="left:333.90px;top:592.00px;font-size:13px;font-weight:400;color:#222;-webkit-text-stroke:0.15px #222;transform:scaleX(0.9700);">Dodavatel - školení 6</span>
<span class="t" id="r5c3" style="left:489.10px;top:592.00px;font-size:13px;font-weight:400;color:#222;-webkit-text-stroke:0.15px #222;">45359326</span>
<span class="t" id="r5c4" style="left:589.20px;top:592.00px;font-size:13px;font-weight:400;color:#222;-webkit-text-stroke:0.15px #222;transform:scaleX(0.9700);">17. 5. 2025 9:42</span>
<span class="t" id="r5c5" style="left:738.90px;top:592.00px;font-size:13px;font-weight:400;color:#222;-webkit-text-stroke:0.15px #222;transform:scaleX(0.9700);">Vzata zpět</span>
<span class="t" id="r6c1" style="left:253.40px;top:617.00px;font-size:13px;font-weight:400;color:#222;-webkit-text-stroke:0.15px #222;transform:scaleX(0.9700);">007</span>
<span class="t" id="r6c2" style="left:333.90px;top:617.00px;font-size:13px;font-weight:400;color:#222;-webkit-text-stroke:0.15px #222;transform:scaleX(0.9700);">Dodavatel - školení 3</span>
<span class="t" id="r6c3" style="left:489.10px;top:617.00px;font-size:13px;font-weight:400;color:#222;-webkit-text-stroke:0.15px #222;">12345678</span>
<span class="t" id="r6c4" style="left:589.20px;top:617.00px;font-size:13px;font-weight:400;color:#222;-webkit-text-stroke:0.15px #222;transform:scaleX(0.9700);">17. 5. 2025 9:43</span>
<span class="t" id="r6c5" style="left:738.90px;top:617.00px;font-size:13px;font-weight:400;color:#222;-webkit-text-stroke:0.15px #222;transform:scaleX(0.9700);">Podána</span>
<span class="t" id="pw0" style="left:609.65px;top:310.90px;font-size:13px;font-weight:400;color:#555;-webkit-text-stroke:0.45px #555;transform:scaleX(0.9856);">Některý</span>
<span class="t" id="pw1" style="left:659.30px;top:310.90px;font-size:13px;font-weight:400;color:#555;-webkit-text-stroke:0.45px #555;transform:scaleX(1.1538);">z</span>
<span class="t" id="pw2" style="left:672.70px;top:310.90px;font-size:13px;font-weight:400;color:#555;-webkit-text-stroke:0.45px #555;transform:scaleX(0.9807);">dodavatelů</span>
<span class="t" id="pw3" style="left:741.30px;top:310.90px;font-size:13px;font-weight:400;color:#555;-webkit-text-stroke:0.45px #555;transform:scaleX(0.9933);">podal</span>
<span class="t" id="pw4" style="left:779.70px;top:310.90px;font-size:13px;font-weight:400;color:#555;-webkit-text-stroke:0.45px #555;transform:scaleX(0.9770);">nabídku</span>
<span class="t" id="pw5" style="left:831.10px;top:310.90px;font-size:13px;font-weight:400;color:#555;-webkit-text-stroke:0.45px #555;transform:scaleX(1.0160);">po</span>
<span class="t" id="pw6" style="left:851.20px;top:310.90px;font-size:13px;font-weight:400;color:#555;-webkit-text-stroke:0.45px #555;transform:scaleX(1.0059);">lhůtě.</span>
<span class="t" id="pw7" style="left:889.40px;top:310.90px;font-size:13px;font-weight:400;color:#555;-webkit-text-stroke:0.45px #555;transform:scaleX(0.9736);">Pro</span>
<span class="t" id="pw8" style="left:915.30px;top:310.90px;font-size:13px;font-weight:400;color:#555;-webkit-text-stroke:0.45px #555;transform:scaleX(0.9722);">označení</span>
<span class="t" id="pw9" style="left:972.90px;top:310.90px;font-size:13px;font-weight:400;color:#555;-webkit-text-stroke:0.45px #555;transform:scaleX(0.9836);">nabídky</span>
<span class="t" id="pw10" style="left:1023.20px;top:310.90px;font-size:13px;font-weight:400;color:#555;-webkit-text-stroke:0.45px #555;transform:scaleX(1.0227);">jako</span>
<span class="t" id="p2" style="left:609.65px;top:325.30px;font-size:13px;font-weight:400;color:#555;-webkit-text-stroke:0.45px #555;transform:scaleX(0.9697);">nepodané použijte Ad hoc - Označení nabídky jako nepodané.</span>
</body></html>
